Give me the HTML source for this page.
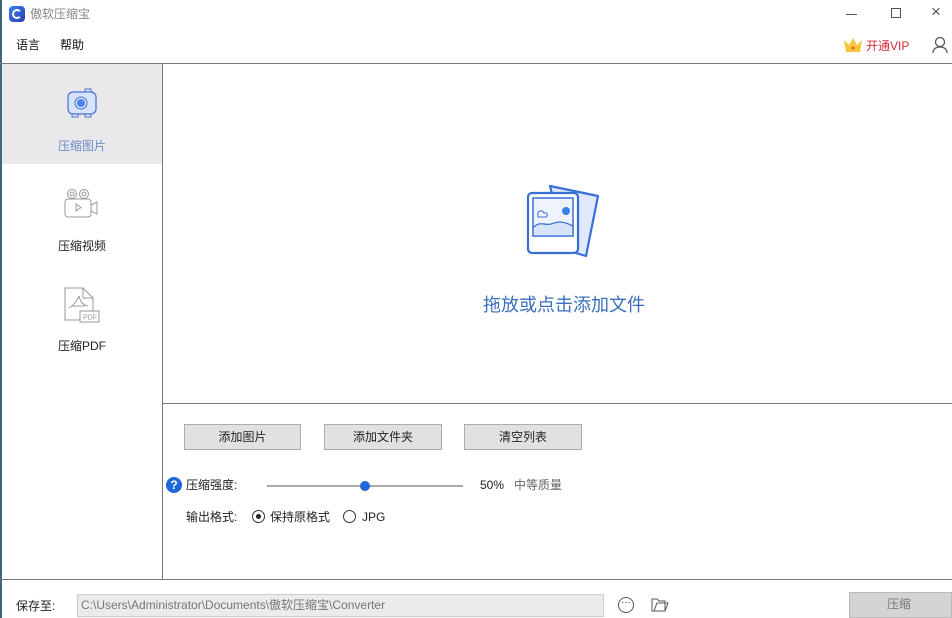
<!DOCTYPE html>
<html><head><meta charset="utf-8"><style>
*{margin:0;padding:0;box-sizing:border-box}
body{width:952px;height:618px;overflow:hidden;background:#fff;font-family:"Liberation Sans","Noto Sans CJK SC",sans-serif;font-size:12px;color:#222;position:relative}
.a{position:absolute;line-height:1.2}
.btn{position:absolute;top:424px;height:26px;background:#e1e1e1;border:1px solid #adadad;text-align:center;line-height:24px;font-size:12px;color:#222}
</style></head><body>
<div class="a" style="left:0;top:0;width:2px;height:618px;background:#3c6b78"></div>
<div class="a" style="left:9px;top:6px;width:16px;height:16px;border-radius:4px;background:linear-gradient(135deg,#3a7ff0,#2d3fae)"></div>
<div class="a" style="left:12px;top:9px;width:10px;height:10px;border:2px solid #fff;border-radius:50%;border-right-color:transparent"></div>
<div class="a" style="left:30px;top:7px;font-size:12px;color:#888">傲软压缩宝</div>
<div class="a" style="left:846px;top:14px;width:11px;height:1px;background:#555"></div>
<div class="a" style="left:891px;top:8px;width:10px;height:10px;border:1px solid #555"></div>
<div class="a" style="left:931px;top:2px;font-size:17px;color:#555">×</div>
<div class="a" style="left:16px;top:38px;font-size:12px;color:#111">语言</div>
<div class="a" style="left:60px;top:38px;font-size:12px;color:#111">帮助</div>
<svg class="a" style="left:842px;top:36px" width="22" height="18"><path d="M2 4l5 5 4-7 4 7 5-5-2 12H4z" fill="#f7c43a"/><circle cx="11" cy="12" r="1.5" fill="#e06020"/></svg>
<div class="a" style="left:866px;top:39px;font-size:12px;color:#d42c3a">开通VIP</div>
<svg class="a" style="left:932px;top:36px" width="16" height="18" fill="none" stroke="#555" stroke-width="1.3"><circle cx="8" cy="6" r="4.5"/><path d="M1 17c0-4 3-6 7-6s7 2 7 6"/></svg>
<div class="a" style="left:0;top:63px;width:952px;height:1px;background:#777"></div>
<div class="a" style="left:2px;top:64px;width:160px;height:100px;background:#e9e9eb"></div>
<div class="a" style="left:162px;top:64px;width:1px;height:515px;background:#777"></div>
<svg class="a" style="left:66px;top:88px" width="32" height="30"><rect x="2" y="4" width="28" height="22" rx="5" fill="#d5e3fb" stroke="#4a6fd0" stroke-width="1.2"/><rect x="19" y="1" width="6" height="3" fill="none" stroke="#4a6fd0"/><circle cx="15" cy="15" r="6" fill="none" stroke="#4a6fd0"/><circle cx="15" cy="15" r="4" fill="#4a86f0"/><path d="M6 26v3h6v-3M19 26v3h6v-3" fill="none" stroke="#4a6fd0"/></svg>
<div class="a" style="left:58px;top:139px;font-size:12px;color:#6f8bc4">压缩图片</div>
<svg class="a" style="left:63px;top:188px" width="38" height="32" fill="none" stroke="#999" stroke-width="1"><circle cx="9" cy="6" r="4.5"/><circle cx="9" cy="6" r="2"/><circle cx="21" cy="6" r="4.5"/><circle cx="21" cy="6" r="2"/><rect x="2" y="11" width="26" height="18" rx="3"/><path d="M28 17l6-3v12l-6-3M13 16v7l5-3.5z"/></svg>
<div class="a" style="left:58px;top:239px;font-size:12px;color:#222">压缩视频</div>
<svg class="a" style="left:63px;top:286px" width="38" height="38" fill="none" stroke="#999" stroke-width="1"><path d="M2 2h18l10 10v22H2z"/><path d="M20 2v10h10"/><path d="M16 10c-2 5 -5 9 -10 12M16 10c1 5 4 9 9 10M8 20h14" /><rect x="17" y="25" width="19" height="11" fill="#fff"/><text x="20" y="33.5" font-size="7" fill="#999" stroke="none" font-family="Liberation Sans">PDF</text></svg>
<div class="a" style="left:58px;top:339px;font-size:12px;color:#222">压缩PDF</div>
<svg class="a" style="left:526px;top:182px" width="76" height="76"><path d="M24 4l48 10-12 60-20-6z" fill="#dfe9fb" stroke="#3a6fd8" stroke-width="2.2" stroke-linejoin="round"/><rect x="2" y="11" width="50" height="60" rx="4" fill="#fff" stroke="#3a6fd8" stroke-width="2.2"/><rect x="7" y="16" width="40" height="38" fill="#eef3fd" stroke="#3a6fd8" stroke-width="1.5"/><path d="M7 46c7-8 12-2 18-4 6-2 10-4 22 2v10H7z" fill="#d6e3fb" stroke="#3a6fd8" stroke-width="1.3"/><circle cx="40" cy="29" r="4" fill="#3a7ff0"/><path d="M12 33a3 3 0 0 1 6-2 2 2 0 0 1 2 4h-8z" fill="none" stroke="#3a6fd8"/></svg>
<div class="a" style="left:483px;top:295px;font-size:18px;color:#3a6fbb">拖放或点击添加文件</div>
<div class="a" style="left:163px;top:403px;width:789px;height:1px;background:#777"></div>
<div class="btn" style="left:184px;width:117px">添加图片</div>
<div class="btn" style="left:324px;width:118px">添加文件夹</div>
<div class="btn" style="left:464px;width:118px">清空列表</div>
<div class="a" style="left:166px;top:477px;width:16px;height:16px;border-radius:50%;background:#1d67d8;color:#fff;font-size:12px;font-weight:bold;text-align:center;line-height:16px">?</div>
<div class="a" style="left:186px;top:478px;font-size:12px">压缩强度:</div>
<div class="a" style="left:267px;top:485px;width:196px;height:2px;background:#aaa"></div>
<div class="a" style="left:360px;top:481px;width:10px;height:10px;border-radius:50%;background:#1d67d8"></div>
<div class="a" style="left:480px;top:478px;font-size:12px">50%</div>
<div class="a" style="left:514px;top:478px;font-size:12px;color:#666">中等质量</div>
<div class="a" style="left:186px;top:510px;font-size:12px">输出格式:</div>
<div class="a" style="left:252px;top:510px;width:13px;height:13px;border-radius:50%;border:1px solid #333"></div>
<div class="a" style="left:256px;top:514px;width:5px;height:5px;border-radius:50%;background:#222"></div>
<div class="a" style="left:270px;top:510px;font-size:12px">保持原格式</div>
<div class="a" style="left:343px;top:510px;width:13px;height:13px;border-radius:50%;border:1px solid #333"></div>
<div class="a" style="left:362px;top:510px;font-size:12px">JPG</div>
<div class="a" style="left:0;top:579px;width:952px;height:1px;background:#777"></div>
<div class="a" style="left:16px;top:599px;font-size:12px">保存至:</div>
<div class="a" style="left:77px;top:594px;width:527px;height:23px;background:#ebebeb;border:1px solid #ccc;color:#777;font-size:12px;line-height:21px;padding-left:3px">C:\Users\Administrator\Documents\傲软压缩宝\Converter</div>
<div class="a" style="left:618px;top:597px;width:16px;height:16px;border-radius:50%;border:1px solid #555;font-size:10px;text-align:center;line-height:10px;color:#333">···</div>
<svg class="a" style="left:651px;top:597px" width="18" height="16" fill="none" stroke="#555"><path d="M1 2h5l2 2h6v10H1z M3 14l3-8h11l-3 8"/></svg>
<div class="a" style="left:849px;top:592px;width:103px;height:26px;background:#d4d4d4;border:1px solid #bbb;color:#777;font-size:12px;padding-left:37px;padding-top:4px">压缩</div>
</body></html>
